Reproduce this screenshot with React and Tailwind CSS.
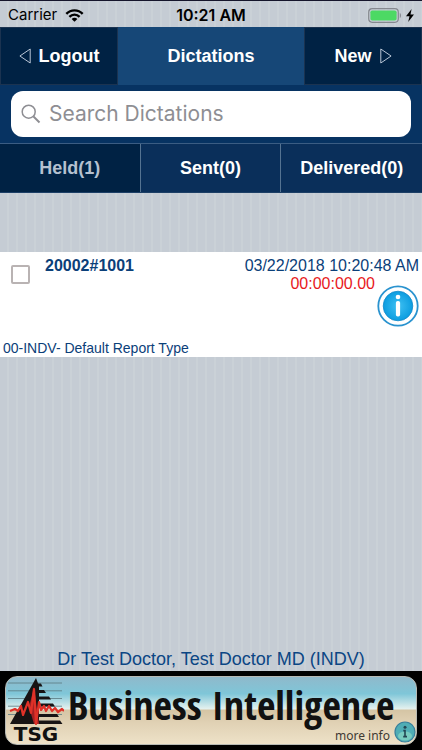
import React, { useState } from "react";

const tabs = [
  { id: "held", label: "Held(1)" },
  { id: "sent", label: "Sent(0)" },
  { id: "delivered", label: "Delivered(0)" },
];

const dictations = [
  {
    id: "20002#1001",
    date: "03/22/2018 10:20:48 AM",
    length: "00:00:00.00",
    type: "00-INDV- Default Report Type",
  },
];

function StatusBar() {
  return (
    <div className="grid h-[27px] grid-cols-3 items-center border-t border-[#15152b] px-2 pt-[2px] font-['Inter',sans-serif] text-base text-black">
      <div className="flex items-center gap-2">
        <span className="text-[15px]">Carrier</span>
        <svg viewBox="0 0 20 14" className="h-[13px] w-[19px]" fill="none" stroke="#000" strokeWidth="2.6">
          <path d="M1.2 5.2C6 .2 14 .2 18.8 5.2" />
          <path d="M4.5 8.4c3.1-3.1 7.9-3.1 11 0" />
          <path d="M10 13.8 6.9 10.7c1.8-1.6 4.4-1.6 6.2 0z" fill="#000" stroke="none" />
        </svg>
      </div>
      <span className="text-center font-semibold whitespace-nowrap">10:21 AM</span>
      <div className="flex items-center justify-end gap-1">
        <svg viewBox="0 0 34 15" className="h-[15px] w-[34px]">
          <rect x=".7" y=".7" width="29.6" height="13.6" rx="3.5" fill="none" stroke="#85888f" strokeWidth="1.2" />
          <rect x="2.4" y="2.4" width="26.2" height="10.2" rx="1.8" fill="#4cd964" />
          <path d="M31.8 5v5c1.6-.6 1.6-4.4 0-5z" fill="#85888f" />
        </svg>
        <svg viewBox="0 0 8 13" className="h-[13px] w-2" fill="#000">
          <path d="M5.6 0 0 7.3h3.5L2.2 13 8 5.4H4.5z" />
        </svg>
      </div>
    </div>
  );
}

function Header() {
  return (
    <header className="grid h-[58px] grid-cols-[118fr_186fr_118fr] text-lg font-bold text-white">
      <button className="flex items-center justify-center gap-2 border border-[#1b3350] bg-[#002244]">
        <svg viewBox="0 0 12 16" className="h-4 w-3" fill="none" stroke="#b9c6d6" strokeWidth="1">
          <path d="M11.2 1v14L.9 8z" />
        </svg>
        Logout
      </button>
      <h1 className="flex items-center justify-center bg-[#164777]">Dictations</h1>
      <button className="flex items-center justify-center gap-2 border border-[#1b3350] bg-[#002244]">
        New
        <svg viewBox="0 0 12 16" className="h-4 w-3" fill="none" stroke="#b9c6d6" strokeWidth="1">
          <path d="M.8 1v14L11.1 8z" />
        </svg>
      </button>
    </header>
  );
}

function InfoIcon() {
  return (
    <svg viewBox="0 0 42 42" className="h-[42px] w-[42px]">
      <defs>
        <radialGradient id="infoFill">
          <stop offset="0" stopColor="#3fc0f2" />
          <stop offset="1" stopColor="#0c9de0" />
        </radialGradient>
      </defs>
      <circle cx="21" cy="21" r="19.7" fill="#fff" stroke="#2a93cf" strokeWidth="1.8" />
      <circle cx="21" cy="21" r="14.8" fill="url(#infoFill)" stroke="#1489c9" strokeWidth=".8" />
      <circle cx="21" cy="12" r="2.3" fill="#fff" />
      <rect x="18.9" y="16" width="4.2" height="15.5" rx="1.8" fill="#fff" />
    </svg>
  );
}

function DictationRow({ item }) {
  const [checked, setChecked] = useState(false);

  return (
    <li className="flex h-[105px] flex-col justify-between bg-white text-[#0b4079]">
      <div className="flex items-start pt-[5px]">
        <input
          type="checkbox"
          aria-label={item.id}
          checked={checked}
          onChange={() => setChecked(!checked)}
          className="mt-2 ml-[11px] h-[19px] w-[19px] appearance-none rounded-xs border-2 border-[#b9b3b3] bg-white checked:bg-[#164777]"
        />
        <span className="ml-[15px] text-base leading-[18px] font-bold">{item.id}</span>
        <div className="mr-[3px] ml-auto flex flex-col items-end text-base leading-[18px]">
          <span>{item.date}</span>
          <div className="flex items-start">
            <span className="text-[#e8191c]">{item.length}</span>
            <button aria-label="Dictation info" className="mt-[10px] ml-[2px]">
              <InfoIcon />
            </button>
          </div>
        </div>
      </div>
      <p className="px-[3px] text-sm leading-[18px]">{item.type}</p>
    </li>
  );
}

function TsgLogo() {
  return (
    <svg viewBox="0 0 56 48" className="h-12 w-14">
      <path d="M0 6h54M0 13.800h54M0 21.500h54M0 29.200h54M0 37.500h54" stroke="#5a7a82" strokeWidth=".8" />
      <path d="M28 1 31 9v38H2z" fill="#171314" />
      <path d="M29 6.500h4l1.500 3H29zM29 13h7l2 3h-9zM29 19.500h12l2 3H29zM29 26.500h16l2 3H29zM29 37h20l2 3H29zM29 43.500h23l2.500 3.500H29z" fill="#171314" />
      <path d="M26 10 31 47h-5L21 30z" fill="#a32023" />
      <path d="M2 34l5-2 3 2 3-5 2 9 5-13 3 11 3-24 2 35 3-22 2 8 3-4 2 5 3-5 3 5 3-3 3 4 4-3 2 2" fill="none" stroke="#df3128" strokeWidth="2.200" strokeLinejoin="round" />
    </svg>
  );
}

function Banner() {
  return (
    <footer className="bg-black p-[5px]">
      <a
        href="#business-intelligence"
        className="flex h-[69px] items-start rounded-xl border border-[#b8bab4] bg-[linear-gradient(#8fb9cb_0%,#7fc6d8_25%,#e2f0ee_47%,#d5c5a5_50%,#e0d1b4_68%,#eee2c8_100%)] text-[#111]"
      >
        <div className="ml-[2px] flex w-14 shrink-0 flex-col items-center">
          <TsgLogo />
          <span className="font-['DejaVu_Sans',sans-serif] text-xl leading-[18px] font-bold">TSG</span>
        </div>
        <div className="flex h-full flex-1 flex-col pt-1 pl-1">
          <span className="font-['Open_Sans_Condensed','Liberation_Sans_Narrow',sans-serif] text-[40px] leading-[48px] font-bold whitespace-nowrap">
            Business Intelligence
          </span>
          <span className="flex items-center justify-end gap-1 font-['Noto_Sans',sans-serif] text-xs leading-[14px] text-[#3f3a34]">
            more info
            <svg viewBox="0 0 22 22" className="-mt-2 h-[22px] w-[22px]">
              <circle cx="11" cy="11" r="10" fill="#4fadb5" stroke="#387f9c" strokeWidth="1.200" />
              <ellipse cx="11" cy="15" rx="7" ry="4.500" fill="#78cbbf" />
              <circle cx="11" cy="6.300" r="1.500" fill="#244552" />
              <path d="M9.300 9.600H11v6M9.200 15.600h3.800" fill="none" stroke="#244552" strokeWidth="1.600" />
            </svg>
          </span>
        </div>
      </a>
    </footer>
  );
}

export default function App() {
  const [active, setActive] = useState("held");
  const [query, setQuery] = useState("");

  return (
    <div className="flex min-h-screen w-full flex-col bg-[#c5ccd4] bg-[repeating-linear-gradient(90deg,#c5ccd4_0px,#c5ccd4_7px,#cad1d7_7px,#cad1d7_9px)] font-['Liberation_Sans',Arial,sans-serif]">
      <StatusBar />

      <div className="bg-[#073362]">
        <Header />

        {/* Search */}
        <label className="mx-[11px] my-[6px] flex h-[46px] items-center gap-2 rounded-xl bg-white px-[10px]">
          <svg viewBox="0 0 20 20" className="h-5 w-5 shrink-0" fill="none" stroke="#8e8e93" strokeWidth="1.500">
            <circle cx="7.700" cy="7.700" r="6.500" />
            <path d="M12.500 12.500 18.500 18.500" strokeWidth="2" />
          </svg>
          <input
            type="text"
            aria-label="Search Dictations"
            placeholder="Search Dictations"
            value={query}
            onChange={(e) => setQuery(e.target.value)}
            className="w-full min-w-0 font-['Inter',sans-serif] text-[21px] text-black outline-none placeholder:text-[#8e8e93]"
          />
        </label>

        {/* Tabs */}
        <div className="grid h-[50px] grid-cols-3 border-y border-t-[#3b5d83] border-b-[#1c3f66]">
          {tabs.map((tab) => (
            <button
              key={tab.id}
              onClick={() => setActive(tab.id)}
              className={`border-r border-[#557391] text-lg font-bold last:border-r-0 ${
                active === tab.id ? "bg-[#002244] text-[#b5c1d0]" : "bg-[#0a2f5a] text-white"
              }`}
            >
              {tab.label}
            </button>
          ))}
        </div>
      </div>

      <main className="flex flex-1 flex-col pt-[59px]">
        <ul>
          {dictations.map((item) => (
            <DictationRow key={item.id} item={item} />
          ))}
        </ul>
        <p className="mt-auto text-center text-lg leading-6 text-[#0b4684]">
          Dr Test Doctor, Test Doctor MD (INDV)
        </p>
      </main>

      <Banner />
    </div>
  );
}
